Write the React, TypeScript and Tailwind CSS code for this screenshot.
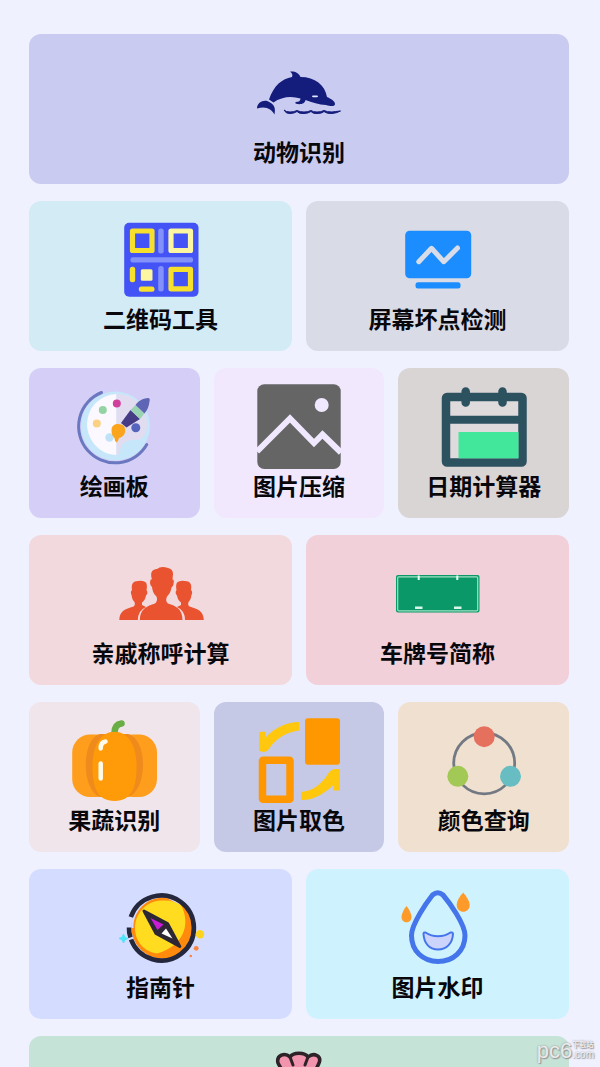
import type { ReactNode } from "react";
import clsx from "clsx";

function Icon({ children }: { children: ReactNode }) {
  return (
    <svg viewBox="0 0 84 84" className="size-[84px] overflow-visible" fill="none" aria-hidden="true">
      {children}
    </svg>
  );
}

const DolphinIcon = () => (
  <Icon>
    <g fill="#141c7c">
      <path d="M12 48.500C17 34 25 28 35 26C36 24 35 22 33 20.500C38 20 42 22 43.500 26C58 26 68 34 70 46C73 47.500 78 49.500 78 53C78 55.500 74 55.500 69 54C62 54 55 51 48.500 49C48 53 43 54 38.500 52.500V51C42 51 43.500 50 43.500 47.500C34 44.500 24 46 16.500 51.500Z" />
      <path d="M0 57.500C0 51 8 47.500 13 51.500C18 54 18.500 58 17.500 63.500C14.500 58 9 54.500 0 57.500Z" />
    </g>
    <path d="M56 45.300H60" stroke="#e6e8ff" strokeWidth="1.800" strokeLinecap="round" />
    <path
      d="M27 59Q29 63 33 62.500Q37 62.500 40 60.500Q42 63 47 62.500Q51 62.500 54 60.500Q56 63 60 62.500Q65 62.500 67 60.500Q70 63 75 62.500Q80 62 83.500 60Q78 60.500 75 61Q70 61 67 59.500Q64 61 60 61Q56 61 54 59.500Q51 61 47 61Q43 61 40 59.500Q37 61 33 61Q29 61 27 59Z"
      fill="#141c7c"
      stroke="#141c7c"
    />
  </Icon>
);

const QrIcon = () => (
  <Icon>
    <rect x="5.200" y="4.700" width="74.300" height="74" rx="5" fill="#4353f5" />
    <g fill="#8391fb">
      <rect x="39.200" y="10.500" width="5.500" height="25" rx="2.500" />
      <rect x="39.200" y="48" width="5.500" height="25.500" rx="2.500" />
      <rect x="11.500" y="39.300" width="62.500" height="5.300" rx="2" />
    </g>
    <g strokeWidth="5.200" strokeLinejoin="round">
      <rect x="13.500" y="13" width="19.500" height="19.500" stroke="#f7e02c" />
      <rect x="52" y="13" width="19.500" height="19.500" stroke="#fdf6a0" />
      <rect x="52" y="51.300" width="19.500" height="19.500" stroke="#f7e02c" />
    </g>
    <rect x="10.800" y="48.700" width="5.400" height="15.600" rx="2.500" fill="#f7e02c" />
    <rect x="21.800" y="51.300" width="11.700" height="11.400" rx="1.500" fill="#fdf6a0" />
    <rect x="19.800" y="68.500" width="15.700" height="5.300" rx="2.500" fill="#f7e02c" />
  </Icon>
);

const ScreenIcon = () => (
  <Icon>
    <rect x="9.200" y="12.700" width="66" height="47.600" rx="4.500" fill="#1b8dff" />
    <rect x="19.500" y="64.300" width="45" height="6.200" rx="2.500" fill="#1b8dff" />
    <path
      d="M22.800 43.700L35.500 30.300L47.800 43.700L61.500 30"
      stroke="#d9dce9"
      strokeWidth="5"
      strokeLinecap="round"
      strokeLinejoin="round"
    />
  </Icon>
);

const PaletteIcon = () => (
  <Icon>
    <circle cx="43.500" cy="41" r="34.500" fill="#c6e6fa" />
    <path d="M29.500 7.500A36.500 36.500 0 1 0 74.800 59.500" stroke="#6a78c0" strokeWidth="3" strokeLinecap="round" />
    <path d="M44.500 9A30 30 0 0 0 15 39C15 55 28 70 44.500 70Z" fill="#fbf8ff" />
    <path d="M44.500 9C62 9 75 22 75 39C75 49 71 54 65 55C55 54 49 58 48 66Q47 70 44.500 70Z" fill="#e2dcf1" />
    <circle cx="37.500" cy="52.500" r="4.200" fill="#bfe2f7" />
    <circle cx="30.800" cy="25" r="4" fill="#94d3a2" />
    <circle cx="44.800" cy="18.500" r="4" fill="#cf3f9b" />
    <circle cx="24.800" cy="38.500" r="4" fill="#fcd184" />
    <circle cx="63.800" cy="42.700" r="4.500" fill="#5564bd" />
    <path d="M49 38L58.500 25L68 34L54.500 42.500Z" fill="#453c85" />
    <path d="M58.500 25L63.500 20L72.500 28.500L68 34Z" fill="#9ad3b3" />
    <path d="M63.500 20C67 15 72 13.500 76 13Q78.500 13 77.500 16.500C77 21 75.500 25 72.500 28.500Z" fill="#5f65b5" />
    <path d="M39.500 45C39.500 38 48 37.500 52 41C55 47 52 52 47 53Q46.500 56 44.500 57.500Q42.500 56 42.500 53C40 51 39.500 48 39.500 45Z" fill="#fba41e" />
  </Icon>
);

const PictureIcon = () => (
  <Icon>
    <rect x="0.300" y="-0.700" width="83.400" height="84.700" rx="7" fill="#656565" />
    <circle cx="64.700" cy="20" r="7" fill="#f0e8fe" />
    <path d="M0 66.500L33 33.500L57 58L65.500 49.500L84 67.500" stroke="#f0e8fe" strokeWidth="6" />
  </Icon>
);

const CalendarIcon = () => (
  <Icon>
    <rect x="4" y="12" width="76.500" height="65.500" rx="1" fill="#dfdbdc" stroke="#2d525f" strokeWidth="8.500" strokeLinejoin="round" />
    <rect x="16.500" y="47" width="60" height="26.300" fill="#43e79b" />
    <path d="M4 34.800H80" stroke="#2d525f" strokeWidth="8" />
    <path d="M23.700 6.500V17.500M60.500 6.500V17.500" stroke="#2d525f" strokeWidth="8.500" strokeLinecap="round" />
  </Icon>
);

const PeopleIcon = () => (
  <Icon>
    <g fill="#ea5330">
      <path d="M0.300 68C0.500 59 6 57 14.500 54.500Q16.500 53 15.500 50C13.500 48 13 46 12.500 43Q11 40 13 38C12 32 14 29 19 29Q24 28 27 30.500Q28.500 33 27.500 38Q29.500 41 27 43.500C26.500 47 25 49 23 50.500V53L27 55Q19 58.500 18.800 68Z" />
      <path d="M84.800 68C84.500 59 79 57 70.500 54.500Q68.500 53 69.500 50C71.500 48 72 46 72.500 43Q74 40 72 38C73 32 71 29 66 29Q61 28 58 30.500Q56.500 33 57.500 38Q55.500 41 58 43.500C58.500 47 60 49 62 50.500V53L58 55Q66 58.500 66 68Z" />
      <path d="M20.800 68C21 57 28 54 36 51.500Q39 49 37.500 44.500C34.500 42 33.500 39 33 35Q30 32 31.500 28Q32 27 33 27.500C31 21 32.500 17.500 38 17Q42 13.500 49 16Q54 17 54 22L53.500 27.500Q55.500 27.500 54.500 32Q54 35 52.500 35.500C52 39 50.500 42 48 44.500Q46 49 49 51.500C57 54 63.500 57 63.500 68Z" />
    </g>
  </Icon>
);

const PlateIcon = () => (
  <Icon>
    <rect x="0" y="23" width="83.500" height="37.500" rx="2" fill="#0a9868" />
    <rect x="1.700" y="24.800" width="80" height="34" rx="1" stroke="#9fe0c2" strokeWidth="1.200" />
    <path d="M22.700 23.500V28M61.300 23.500V28" stroke="#e8fff4" strokeWidth="2" />
    <path d="M19 55.700H26.500M58 55.700H65.500" stroke="#d9f7e8" strokeWidth="2.600" />
  </Icon>
);

const PumpkinIcon = () => (
  <Icon>
    <path d="M42.500 14Q42.500 5.500 49.500 4.500" stroke="#69ad45" strokeWidth="6.500" strokeLinecap="round" />
    <rect x="0.200" y="15.500" width="42" height="62.500" rx="18" fill="#ff9d1c" />
    <rect x="43" y="15.500" width="42" height="62.500" rx="18" fill="#ff9d1c" />
    <path d="M28 15C9 20 9 71 28 78H56C76 71 76 20 56 15Z" fill="#ef8b1c" />
    <path d="M42.500 12.700C56 12.700 64.500 26 64.500 47C64.500 68 60 82 42.500 82C25 82 20.500 68 20.500 47C20.500 26 29 12.700 42.500 12.700Z" fill="#ff9a08" />
    <path d="M28.700 29.500Q28.500 23.500 33.500 22.500M28.700 44.500V59.500" stroke="#fffae9" strokeWidth="4.500" strokeLinecap="round" />
  </Icon>
);

const SwapColorIcon = () => (
  <Icon>
    <rect x="48" y="-0.700" width="35" height="46.400" rx="3" fill="#ff9800" />
    <rect x="5.500" y="41.200" width="27.500" height="39" rx="0.500" stroke="#ff9800" strokeWidth="7.500" strokeLinejoin="round" />
    <path d="M42.300 3V11.500C30 13 19 19 12 30Q10 33 7 33Q2 33 2 30V13.500Q6 12 8.500 13V18.500C18 8.500 30 3 42.300 3Z" fill="#ffc80f" />
    <path d="M44 81V73C56 72 65 65 71.500 54Q75 50 78 50H83V71.500H76.500V66C67 75 56 81.500 44 81Z" fill="#ffc80f" />
  </Icon>
);

const ColorRingIcon = () => (
  <Icon>
    <circle cx="42.200" cy="44.300" r="30.500" stroke="#737983" strokeWidth="2.800" />
    <circle cx="42.200" cy="17.700" r="10.500" fill="#e5705e" />
    <circle cx="15.800" cy="57.300" r="10.500" fill="#a2c955" />
    <circle cx="68.500" cy="57.300" r="10.500" fill="#67bdc2" />
  </Icon>
);

const CompassIcon = () => (
  <Icon>
    <circle cx="43.500" cy="41.500" r="31" fill="#ff8a0c" />
    <path d="M62 19C72 38 65 60 38 67.500C26 66 16 56 16 42C16 28 27 15 42 14.500C50 14 57 15 62 19Z" fill="#ffdc20" />
    <path d="M62 19C57 14 48 11 40 12C24 14 14 28 14.500 42L12.500 42C12 26 24 9.500 42 9.500Z" fill="#d4dcff" />
    <path d="M11.800 31A32.500 32.500 0 1 1 12 53.500M10 41.500Q9.800 47 11.500 51.500" stroke="#25273c" strokeWidth="4.600" />
    <path d="M25 25L48.500 37.500L60.800 60.500L37 47.500Z" fill="#2d2735" stroke="#2d2735" strokeWidth="3" strokeLinejoin="round" />
    <path d="M31.500 32L44.500 38.500L38.500 44Z" fill="#c91dd5" />
    <path d="M47 42.500L53.500 52.500L42.500 47.500Z" fill="#fff" />
    <circle cx="81" cy="48.300" r="4.200" fill="#ffd41e" />
    <circle cx="77.200" cy="62.300" r="2.400" fill="#f98540" />
    <circle cx="71.800" cy="70" r="1.300" fill="#f98540" />
    <path d="M4.500 48Q5 52 9 52.500Q5 53 4.500 57Q4 53 0 52.500Q4 52 4.500 48Z" fill="#4ce4fb" stroke="#4ce4fb" />
  </Icon>
);

const WaterIcon = () => (
  <Icon>
    <path
      d="M36.500 9Q41.800 4.500 47 9C53 16 69 38 69 49.500C69 65 57 75.500 42 75.500C27 75.500 15.500 65 15.500 49.500C15.500 38 31 16 36.500 9Z"
      stroke="#4475eb"
      strokeWidth="5"
    />
    <path
      d="M27.500 48Q27.500 46 29.500 46.500C37 51.500 47 51.500 54.500 46.500Q57 46 57 48C56.500 57 51 63.500 42 63.500C33 63.500 28 57 27.500 48Z"
      fill="#cdd4fb"
      stroke="#4475eb"
      strokeWidth="2"
    />
    <path d="M10.500 20C13 23 15.500 28 15.500 31C15.500 38 5.500 38 5.500 31C5.500 28 8 23 10.500 20Z" fill="#fd9a29" />
    <path d="M67.200 6.500C70 10 73.700 15 73.700 19C73.700 28 60.700 28 60.700 19C60.700 15 64 10 67.200 6.500Z" fill="#fd9a29" />
  </Icon>
);

const FlowerIcon = () => (
  <Icon>
    <path
      d="M21 10C19 2 28 -1 33 4C36 -1 48 -1 51 4C57 -1 65 3 62 10C58 20 52 26 42 28C32 26 26 20 21 10Z"
      fill="#f394ae"
      stroke="#2c2227"
      strokeWidth="3.500"
    />
    <path d="M33 4L36 12M51 4L48 12" stroke="#2c2227" strokeWidth="3" strokeLinecap="round" />
    <path d="M42 28V78M42 62Q28 62 24 48Q40 46 42 62Q44 46 60 48Q56 62 42 62" stroke="#2c2227" strokeWidth="3.500" />
  </Icon>
);

const tools = [
  { name: "动物识别", icon: <DolphinIcon />, className: "col-span-6 bg-[#cacbf0]" },
  { name: "二维码工具", icon: <QrIcon />, className: "col-span-3 bg-[#d2ebf5]" },
  { name: "屏幕坏点检测", icon: <ScreenIcon />, className: "col-span-3 bg-[#d9dbe7]" },
  { name: "绘画板", icon: <PaletteIcon />, className: "col-span-2 bg-[#d5cff7]" },
  { name: "图片压缩", icon: <PictureIcon />, className: "col-span-2 bg-[#f2e8fe]" },
  { name: "日期计算器", icon: <CalendarIcon />, className: "col-span-2 bg-[#dad5d5]" },
  { name: "亲戚称呼计算", icon: <PeopleIcon />, className: "col-span-3 bg-[#f2d9dd]" },
  { name: "车牌号简称", icon: <PlateIcon />, className: "col-span-3 bg-[#f1d0d9]" },
  { name: "果蔬识别", icon: <PumpkinIcon />, className: "col-span-2 bg-[#efe5eb]" },
  { name: "图片取色", icon: <SwapColorIcon />, className: "col-span-2 bg-[#c5c9e6]" },
  { name: "颜色查询", icon: <ColorRingIcon />, className: "col-span-2 bg-[#f0e0d0]" },
  { name: "指南针", icon: <CompassIcon />, className: "col-span-3 bg-[#d4dcff]" },
  { name: "图片水印", icon: <WaterIcon />, className: "col-span-3 bg-[#cff3fe]" },
  // only the top edge shows until the list is scrolled
  { name: "", icon: <FlowerIcon />, className: "col-span-6 bg-[#c6e3d8]" },
];

function Watermark() {
  return (
    <div className="pointer-events-none absolute right-1.5 bottom-1 flex items-center text-white/80 [text-shadow:0_0_2px_#888,1px_1px_1px_#999]">
      <span className="text-[22px] leading-6">pc6</span>
      <span className="flex flex-col">
        <span className="text-[7px] leading-2 font-bold">下载站</span>
        <span className="text-[10px] leading-3">.com</span>
      </span>
    </div>
  );
}

export default function App() {
  return (
    <div className="relative h-screen overflow-hidden bg-[#f0f1ff] font-['Liberation_Sans','Noto_Sans_CJK_SC',sans-serif]">
      <main className="h-full overflow-y-auto pt-[34px] pr-[31px] pb-8 pl-[29px] [scrollbar-width:none]">
        <div className="grid grid-cols-6 gap-x-3.5 gap-y-[17px]">
          {tools.map((tool, idx) => (
            <button
              key={idx}
              type="button"
              aria-label={tool.name || "更多工具"}
              className={clsx("flex min-h-[150px] flex-col items-center rounded-xl pt-[17px] pb-[13px]", tool.className)}
            >
              {tool.icon}
              <span className="text-[23px] leading-9 font-bold whitespace-nowrap text-[#08080c]">{tool.name}</span>
            </button>
          ))}
        </div>
      </main>
      <Watermark />
    </div>
  );
}
